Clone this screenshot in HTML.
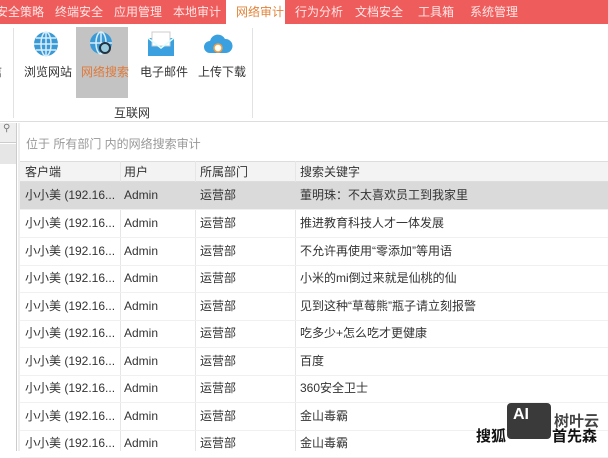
<!DOCTYPE html>
<html><head><meta charset="utf-8"><style>
*{margin:0;padding:0;box-sizing:border-box}
body{width:608px;height:451px;overflow:hidden;background:#fff;font-family:"Liberation Sans","Noto Sans CJK SC",sans-serif;font-size:12px;color:#333;position:relative}
.tabs{position:absolute;left:0;top:0;width:608px;height:24px;background:#ee5c5c}
.tab{position:absolute;top:0;line-height:24px;font-size:12px;color:#ffe6e6}
.act{position:absolute;left:226px;top:0;width:59px;height:25px;background:#fff}
.rib{position:absolute;left:0;top:24px;width:608px;height:98px;background:#fff;border-bottom:1px solid #ddd}
.sep{position:absolute;top:28px;width:1px;height:90px;background:#e2e2e2}
.btn{position:absolute;top:63px;font-size:12px;color:#333}
.abs{position:absolute}
.row{position:absolute;left:20px;width:588px;height:27.5px;border-bottom:1px solid #f0f0f0}
.row span{position:absolute;top:0;line-height:27px;font-size:12px;color:#333}
</style></head><body>
<div class="tabs">
<div class="act"></div>
<span class="tab" style="left:-4px">安全策略</span>
<span class="tab" style="left:55px">终端安全</span>
<span class="tab" style="left:114px">应用管理</span>
<span class="tab" style="left:173px">本地审计</span>
<span class="tab" style="left:236px;color:#e2843a">网络审计</span>
<span class="tab" style="left:295px">行为分析</span>
<span class="tab" style="left:355px">文档安全</span>
<span class="tab" style="left:418px">工具箱</span>
<span class="tab" style="left:470px">系统管理</span>
</div>
<div class="rib">
<div class="sep" style="left:13px;top:4px"></div>
<div class="sep" style="left:252px;top:4px"></div>
<div class="abs" style="left:76px;top:3px;width:52px;height:71px;background:#c3c3c3"></div>
<span class="btn" style="left:-10px;top:39px">信</span>
<span class="btn" style="left:24px;top:39px">浏览网站</span>
<span class="btn" style="left:81px;top:39px;color:#e07a3a">网络搜索</span>
<span class="btn" style="left:140px;top:39px">电子邮件</span>
<span class="btn" style="left:198px;top:39px">上传下载</span>
<span class="btn" style="left:114px;top:80px">互联网</span>
<svg class="abs" style="left:33px;top:7px" width="26" height="26" viewBox="0 0 26 26"><circle cx="13" cy="13" r="12" fill="#3a9ad6"/><g stroke="#d8eefa" stroke-width="1.5" fill="none"><ellipse cx="13" cy="13" rx="5" ry="12"/><line x1="1" y1="13" x2="25" y2="13"/><line x1="3" y1="7" x2="23" y2="7"/><line x1="3" y1="19" x2="23" y2="19"/><line x1="13" y1="1" x2="13" y2="25"/></g></svg>
<svg class="abs" style="left:89px;top:7px" width="26" height="26" viewBox="0 0 26 26"><circle cx="12" cy="12" r="11" fill="#3a9ad6"/><g stroke="#d8eefa" stroke-width="1.5" fill="none"><ellipse cx="12" cy="12" rx="5" ry="11"/><line x1="1" y1="12" x2="23" y2="12"/><line x1="12" y1="1" x2="12" y2="23"/></g><circle cx="16" cy="17" r="5" fill="#9cd" stroke="#234" stroke-width="2"/></svg>
<svg class="abs" style="left:147px;top:7px" width="28" height="26" viewBox="0 0 28 26"><rect x="1" y="7" width="26" height="18" fill="#3aa0e0"/><rect x="5" y="1" width="18" height="14" fill="#fff" stroke="#ccc"/><path d="M1 7 L14 17 L27 7" fill="none" stroke="#dff" stroke-width="1.5"/></svg>
<svg class="abs" style="left:203px;top:7px" width="30" height="26" viewBox="0 0 30 26"><path d="M7 22 A6 6 0 0 1 7 10 A8 8 0 0 1 22 8 A7 7 0 0 1 23 22 Z" fill="#3aa0e0"/><circle cx="15" cy="17" r="4" fill="#fff" stroke="#f2a040" stroke-width="1.5"/></svg>
</div>
<div class="abs" style="left:0;top:123px;width:16px;height:20px;background:#eee;border-bottom:1px solid #ccc;font-size:10px;color:#777;padding-left:3px">⚲</div>
<div class="abs" style="left:0;top:144px;width:16px;height:20px;background:#e6e6e6"></div>
<div class="abs" style="left:16px;top:123px;width:1px;height:328px;background:#ccc"></div>
<div class="abs" style="left:18px;top:123px;width:2px;height:328px;background:#eee"></div>
<span class="abs" style="left:26px;top:135px;color:#999">位于 所有部门 内的网络搜索审计</span>
<div class="abs" style="left:20px;top:161px;width:588px;height:21px;background:#f3f3f3;border-top:1px solid #ddd;border-bottom:1px solid #ddd"></div>
<div class="abs" style="left:120px;top:161px;width:1px;height:290px;background:#e6e6e6"></div>
<div class="abs" style="left:195px;top:161px;width:1px;height:290px;background:#e6e6e6"></div>
<div class="abs" style="left:295px;top:161px;width:1px;height:290px;background:#e6e6e6"></div>
<span class="abs" style="left:25px;top:162px;line-height:20px">客户端</span>
<span class="abs" style="left:124px;top:162px;line-height:20px">用户</span>
<span class="abs" style="left:200px;top:162px;line-height:20px">所属部门</span>
<span class="abs" style="left:300px;top:162px;line-height:20px">搜索关键字</span>
<div class="row" style="top:182px;background:#dadada"><span style="left:5px">小小美 (192.16...</span><span style="left:104px">Admin</span><span style="left:180px">运营部</span><span style="left:280px">董明珠：不太喜欢员工到我家里</span></div>
<div class="row" style="top:210px"><span style="left:5px">小小美 (192.16...</span><span style="left:104px">Admin</span><span style="left:180px">运营部</span><span style="left:280px">推进教育科技人才一体发展</span></div>
<div class="row" style="top:238px"><span style="left:5px">小小美 (192.16...</span><span style="left:104px">Admin</span><span style="left:180px">运营部</span><span style="left:280px">不允许再使用“零添加”等用语</span></div>
<div class="row" style="top:265px"><span style="left:5px">小小美 (192.16...</span><span style="left:104px">Admin</span><span style="left:180px">运营部</span><span style="left:280px">小米的mi倒过来就是仙桃的仙</span></div>
<div class="row" style="top:293px"><span style="left:5px">小小美 (192.16...</span><span style="left:104px">Admin</span><span style="left:180px">运营部</span><span style="left:280px">见到这种“草莓熊”瓶子请立刻报警</span></div>
<div class="row" style="top:320px"><span style="left:5px">小小美 (192.16...</span><span style="left:104px">Admin</span><span style="left:180px">运营部</span><span style="left:280px">吃多少+怎么吃才更健康</span></div>
<div class="row" style="top:348px"><span style="left:5px">小小美 (192.16...</span><span style="left:104px">Admin</span><span style="left:180px">运营部</span><span style="left:280px">百度</span></div>
<div class="row" style="top:375px"><span style="left:5px">小小美 (192.16...</span><span style="left:104px">Admin</span><span style="left:180px">运营部</span><span style="left:280px">360安全卫士</span></div>
<div class="row" style="top:403px"><span style="left:5px">小小美 (192.16...</span><span style="left:104px">Admin</span><span style="left:180px">运营部</span><span style="left:280px">金山毒霸</span></div>
<div class="row" style="top:430px"><span style="left:5px">小小美 (192.16...</span><span style="left:104px">Admin</span><span style="left:180px">运营部</span><span style="left:280px">金山毒霸</span></div>
<span class="abs" style="left:476px;top:425px;font-size:15px;font-weight:bold;color:#111;text-shadow:0 0 2px #fff">搜狐</span>
<span class="abs" style="left:552px;top:425px;font-size:15px;font-weight:bold;color:#111;text-shadow:0 0 2px #fff">首先森</span>
<div class="abs" style="left:507px;top:403px;width:44px;height:36px;background:#3a3a3a;border-radius:4px;color:#fff;font-weight:bold;font-size:16px;padding:3px 0 0 6px">AI</div>
<span class="abs" style="left:554px;top:410px;font-size:15px;font-weight:bold;color:#444">树叶云</span>
</body></html>
